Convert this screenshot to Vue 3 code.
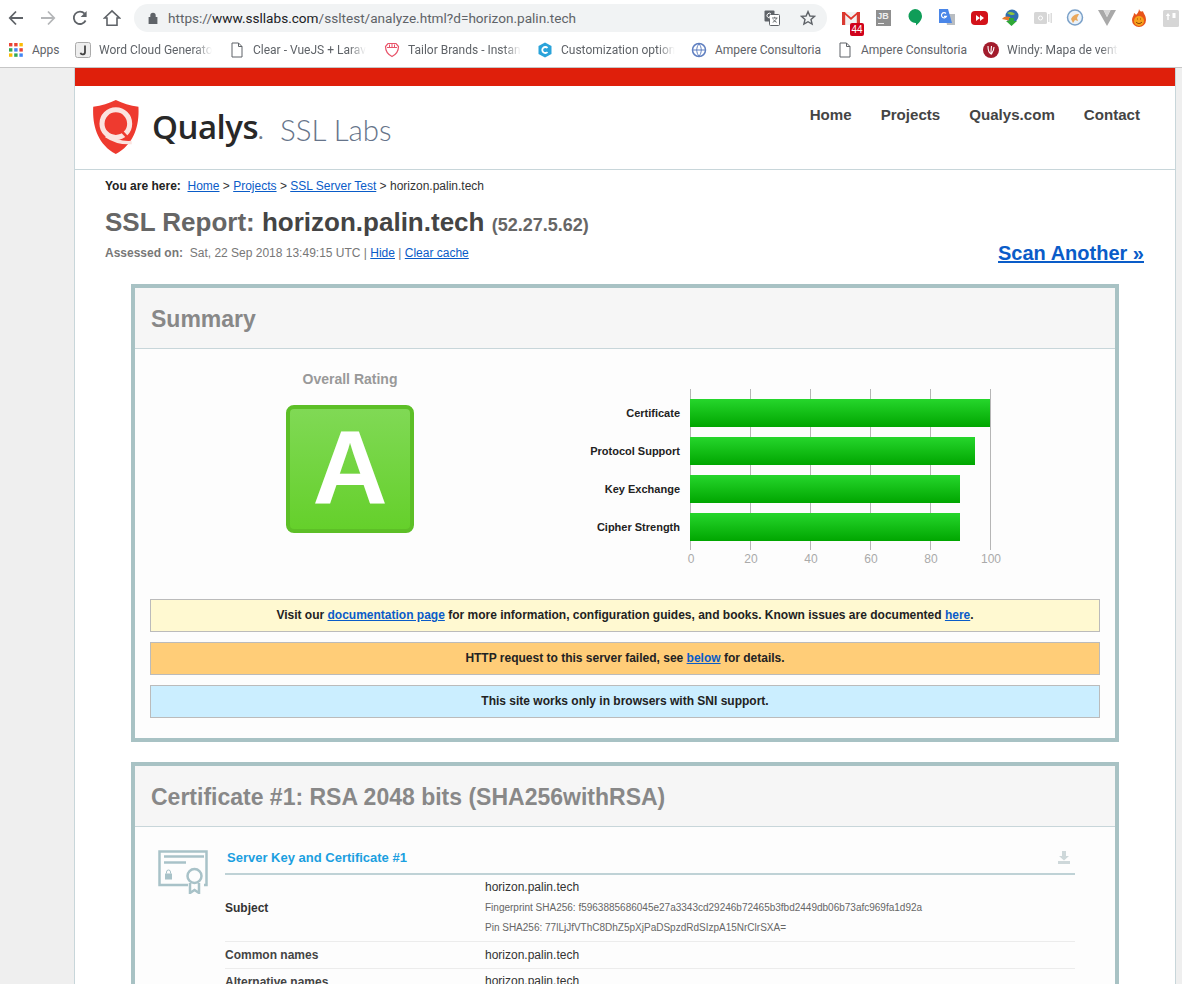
<template>
  <div class="window">
    <!-- browser chrome -->
    <div class="toolbar">
      <button class="nav-btn">
        <svg width="16" height="16" viewBox="0 0 16 16" fill="none" stroke="#5f6368" stroke-width="1.8"><path d="M15 8H2M8 1.5 1.8 8 8 14.5" /></svg>
      </button>
      <button class="nav-btn">
        <svg width="16" height="16" viewBox="0 0 16 16" fill="none" stroke="#b4b6b8" stroke-width="1.8"><path d="M1 8h13M8 1.5 14.2 8 8 14.5" /></svg>
      </button>
      <button class="nav-btn">
        <svg width="16" height="16" viewBox="0 0 16 16" fill="none" stroke="#5f6368" stroke-width="1.8"><path d="M13.6 10.5A6.2 6.2 0 1 1 12.6 3.6" /><path d="M14.6 1v6h-6z" fill="#5f6368" stroke="none" /></svg>
      </button>
      <button class="nav-btn">
        <svg width="18" height="18" viewBox="0 0 18 18" fill="none" stroke="#5f6368" stroke-width="1.6"><path d="M1.5 9 9 1.8 16.500 9H14v7.200H4V9z" /></svg>
      </button>
      <div class="omnibox">
        <svg class="lock" width="10" height="12" viewBox="0 0 10 12"><path d="M2.300 5V3.400a2.700 2.700 0 0 1 5.400 0V5H9.400v7H.6V5z" fill="#5f6368" /></svg>
        <span class="url"><span class="url-dim">https://</span>www.ssllabs.com<span class="url-dim">/ssltest/analyze.html?d=horizon.palin.tech</span></span>
        <svg class="omni-icon" width="16" height="16" viewBox="0 0 16 16">
          <rect x="0.500" y="0.500" width="10" height="11" rx="1" fill="#5f6368" />
          <rect x="5.500" y="4.500" width="10" height="11" rx="1" fill="#fff" stroke="#5f6368" />
          <path d="M8 8h5.500M10.700 6.800V8M12.500 8c-.5 2-2 3.500-3.800 4.300M9.300 9.500c.8 1.300 2 2.300 3.400 2.800" stroke="#5f6368" fill="none" stroke-width=".9" />
          <path d="M7 4a2.300 2.300 0 1 0 .4 2.500H5.300" stroke="#fff" fill="none" stroke-width="1" />
        </svg>
        <svg class="omni-icon star" width="16" height="16" viewBox="0 0 16 16"><path d="M8 1.600 9.900 6l4.700.4-3.600 3.100 1.100 4.600L8 11.700l-4.100 2.400L5 9.500 1.400 6.400 6.100 6z" fill="none" stroke="#5f6368" stroke-width="1.400" /></svg>
      </div>
      <div class="extensions">
        <span class="ext">
          <svg width="18" height="16" viewBox="0 0 18 16"><path d="M0 2h18v13H0z" fill="#f2f2f2" /><path d="M0 2h3.200v13H0zM14.800 2H18v13h-3.200z" fill="#d93a32" /><path d="M0 2h2.500L9 7.500 15.500 2H18L9 10z" fill="#e0352b" /></svg>
          <span class="mail-count">44</span>
        </span>
        <span class="ext"><span class="jb">JB<i></i></span></span>
        <span class="ext">
          <svg width="14" height="18" viewBox="0 0 14 18"><path d="M7 0a7 7 0 0 1 7 7c0 4-3 7-6 9.500V14A7 7 0 0 1 7 0z" fill="#0f9d58" /></svg>
        </span>
        <span class="ext">
          <svg width="18" height="18" viewBox="0 0 18 18"><path d="M7 5h10v11H9z" fill="#b9bdc1" /><path d="M1 0h9l4 14H1z" fill="#4a86e8" /><path d="M8 4.500a2.600 2.600 0 1 0 .5 2.800H6" fill="none" stroke="#fff" stroke-width="1.200" /></svg>
        </span>
        <span class="ext">
          <svg width="17" height="14" viewBox="0 0 17 14"><rect width="17" height="14" rx="4" fill="#d3121a" /><path d="M5 4l4 3-4 3zM9 4l4 3-4 3z" fill="#fff" /></svg>
        </span>
        <span class="ext">
          <svg width="18" height="18" viewBox="0 0 18 18"><circle cx="10" cy="7" r="6.500" fill="#2f6fb0" /><path d="M5 4c3-2 6-1 8 1-2 2-5 1-8-1z" fill="#8dc63f" /><path d="M0 10c2-3 5-3 8-2l1 4z" fill="#e8792b" /><path d="M7 9h5v3h3l-5.500 5L4 12h3z" fill="#2ea836" /></svg>
        </span>
        <span class="ext">
          <svg width="18" height="14" viewBox="0 0 18 14"><rect x="0" y="1" width="13" height="12" rx="1.500" fill="#d6d6d6" /><path d="M14 3h1.500v8H14zM16.500 2H18v10h-1.500z" fill="#dcdcdc" /><circle cx="6.500" cy="7" r="2" fill="none" stroke="#fff" /></svg>
        </span>
        <span class="ext">
          <svg width="18" height="18" viewBox="0 0 18 18"><circle cx="9" cy="8.500" r="7.500" fill="#eaf2fa" stroke="#7aa0c8" stroke-width="1.500" /><path d="M5 10c2-4 5-5 8-5l-2 4 1 3-3-1-2 3z" fill="#e9a75c" /></svg>
        </span>
        <span class="ext">
          <svg width="18" height="16" viewBox="0 0 18 16"><path d="M0 0h5.500L9 7l3.500-7H18l-9 16z" fill="#a9a9a9" /><path d="M5.500 0h7L9 7z" fill="#d9d9d9" /></svg>
        </span>
        <span class="ext">
          <svg width="16" height="19" viewBox="0 0 16 19"><path d="M8 0c1 3 3 3 4 2 0 2 3 4 3 9a7 7 0 0 1-14 0c0-3 2-4 2-7 1 1 2 1 2 2 1-1 3-3 3-6z" fill="#e8541a" /><circle cx="8" cy="12" r="5" fill="#f7a11a" /><path d="M5 13c2 2 4 2 6 0" fill="none" stroke="#7a3208" /><path d="M6 10h.5M9.500 10h.5" stroke="#7a3208" stroke-width="1.500" /></svg>
        </span>
        <span class="ext">
          <svg width="16" height="17" viewBox="0 0 16 17"><rect width="16" height="17" rx="1.500" fill="#d6d6d6" /><path d="M5 3 2.800 6H4.300v4H5.700V6H7.200zM9.500 3h3v5h-3z" fill="#fff" /></svg>
        </span>
      </div>
    </div>
    <div class="bookmarks">
      <a class="bm bm-apps">
        <svg width="14" height="14" viewBox="0 0 14 14">
          <template v-for="(c, i) in appColors" :key="i">
            <rect :x="(i % 3) * 5.200" :y="Math.floor(i / 3) * 5.200" width="3.400" height="3.400" :fill="c" />
          </template>
        </svg>
        <span>Apps</span>
      </a>
      <a v-for="b in bookmarks" :key="b.width + b.title" class="bm" :style="{ width: b.width + 'px' }">
        <svg v-if="b.icon === 'word'" width="16" height="16" viewBox="0 0 16 16"><rect x=".5" y=".5" width="15" height="15" rx="2" fill="#eee" stroke="#aaa" /><path d="M10 3.500V10a2.300 2.300 0 0 1-4.500.8" fill="none" stroke="#444" stroke-width="1.800" /></svg>
        <svg v-else-if="b.icon === 'doc'" width="16" height="16" viewBox="0 0 16 16"><path d="M3 1h6.500L13 4.500V15H3zM9.500 1v3.500H13" fill="none" stroke="#5f6368" /></svg>
        <svg v-else-if="b.icon === 'tailor'" width="16" height="16" viewBox="0 0 16 16"><path d="M4 1.500h8l2.500 3c0 4-2.500 8-6.500 10-4-2-6.500-6-6.500-10z" fill="none" stroke="#e8546a" stroke-width="1.200" /><path d="M3 5.500h10M5.500 2.500v3M8 2v3.500M10.500 2.500v3" stroke="#e8546a" /></svg>
        <svg v-else-if="b.icon === 'custom'" width="16" height="16" viewBox="0 0 16 16"><path d="M8 .5 14.500 4v8L8 15.500 1.500 12V4z" fill="#2aa3da" /><path d="M10.500 6a3 3 0 1 0 0 4" fill="none" stroke="#fff" stroke-width="1.800" /></svg>
        <svg v-else-if="b.icon === 'globe'" width="16" height="16" viewBox="0 0 16 16"><circle cx="8" cy="8" r="6.500" fill="#fff" stroke="#5f7fc0" stroke-width="1.500" /><path d="M2 8h12M8 2c-3 3-3 9 0 12M8 2c3 3 3 9 0 12" fill="none" stroke="#5f7fc0" /></svg>
        <svg v-else width="16" height="16" viewBox="0 0 16 16"><circle cx="8" cy="8" r="8" fill="#a21c2c" /><path d="M5 4c0 4 1 7 3 8 0-3 0-5 .5-8M8.500 12c1-2 2.500-4 2.500-7" fill="none" stroke="#fff" stroke-width="1.100" /></svg>
        <span :class="{ 'bm-fade': b.fade }">{{ b.title }}</span>
      </a>
    </div>

    <!-- page -->
    <div class="page">
      <div class="container">
        <div class="redbar"></div>
        <header class="site-header">
          <div class="logo">
            <svg width="46" height="54" viewBox="0 0 135 160">
              <path d="M67 0c20 10 42 17 67 20 3 55-12 110-67 140C12 130-3 75 0 20 25 17 47 10 67 0z" fill="#ee3a2f" />
              <circle cx="67" cy="70" r="41" fill="#ee3a2f" stroke="#fbe3df" stroke-width="15" />
              <path d="M38 106c24 16 52 22 76 20" fill="none" stroke="#fbe3df" stroke-width="10" />
              <path d="M82 90l26 28" fill="none" stroke="#ee3a2f" stroke-width="8" />
            </svg>
            <span class="logo-name">Qualys<small>.</small></span>
            <span class="logo-sub">SSL Labs</span>
          </div>
          <nav class="site-nav">
            <a>Home</a>
            <a>Projects</a>
            <a>Qualys.com</a>
            <a>Contact</a>
          </nav>
        </header>

        <main class="content">
          <div class="crumbs">
            <b>You are here:</b>&nbsp; <a>Home</a> &gt; <a>Projects</a> &gt; <a>SSL Server Test</a> &gt; horizon.palin.tech
          </div>
          <h1 class="report-title">SSL Report: <span class="host">horizon.palin.tech</span> <span class="ip">(52.27.5.62)</span></h1>
          <div class="assessed-row">
            <div class="assessed"><b>Assessed on:</b>&nbsp; Sat, 22 Sep 2018 13:49:15 UTC | <a>Hide</a> | <a>Clear cache</a></div>
            <a class="scan-another">Scan Another »</a>
          </div>

          <section class="panel summary">
            <h2 class="panel-title">Summary</h2>
            <div class="panel-body">
              <div class="rating-row">
                <div class="rating">
                  <div class="rating-label">Overall Rating</div>
                  <div class="grade">A</div>
                </div>
                <div class="chart">
                  <div class="chart-labels">
                    <div v-for="r in ratings" :key="r.label">{{ r.label }}</div>
                  </div>
                  <div>
                    <div class="plot">
                      <div v-for="r in ratings" :key="r.label" class="bar" :style="{ width: r.value * 3 + 'px' }"></div>
                    </div>
                    <div class="ticks">
                      <span v-for="t in ticks" :key="t">{{ t }}</span>
                    </div>
                  </div>
                </div>
              </div>
              <div class="notice yellow">Visit our <a>documentation page</a> for more information, configuration guides, and books. Known issues are documented <a>here</a>.</div>
              <div class="notice orange">HTTP request to this server failed, see <a>below</a> for details.</div>
              <div class="notice blue">This site works only in browsers with SNI support.</div>
            </div>
          </section>

          <section class="panel cert">
            <h2 class="panel-title">Certificate #1: RSA 2048 bits (SHA256withRSA)</h2>
            <div class="panel-body cert-body">
              <svg class="cert-icon" width="50" height="44" viewBox="0 0 50 44" fill="none" stroke="#a8c2c8">
                <path d="M30 35H1.500V1.500h47V35H46" stroke-width="2.500" />
                <path d="M6 6.500h40" stroke-width="2.500" />
                <path d="M6 12.500h22" stroke-width="2.500" />
                <circle cx="36.500" cy="26" r="7" stroke-width="2.500" />
                <path d="M32 33v10l4.500-3 4.500 3V33" stroke-width="2.500" />
                <rect x="7" y="23.500" width="7" height="6" fill="#a8c2c8" stroke="none" />
                <path d="M8.500 23.500v-1.500a2 2 0 0 1 4 0v1.500" stroke-width="1" />
              </svg>
              <div class="cert-table">
                <div class="cert-head">
                  <span>Server Key and Certificate #1</span>
                  <svg width="12" height="13" viewBox="0 0 12 13"><path d="M4 0h4v5h3L6 9.500 1 5h3zM0 10h12v3H0z" fill="#ced8da" /></svg>
                </div>
                <div class="cert-row">
                  <div class="cert-key strong">Subject</div>
                  <div class="cert-val">
                    <div class="first-line">horizon.palin.tech</div>
                    <div class="fine">Fingerprint SHA256: f5963885686045e27a3343cd29246b72465b3fbd2449db06b73afc969fa1d92a</div>
                    <div class="fine">Pin SHA256: 77lLjJfVThC8DhZ5pXjPaDSpzdRdSIzpA15NrClrSXA=</div>
                  </div>
                </div>
                <div class="cert-row">
                  <div class="cert-key">Common names</div>
                  <div class="cert-val">horizon.palin.tech</div>
                </div>
                <div class="cert-row">
                  <div class="cert-key">Alternative names</div>
                  <div class="cert-val">horizon.palin.tech</div>
                </div>
              </div>
            </div>
          </section>
        </main>
      </div>
    </div>
  </div>
</template>

<script setup>
const appColors = ['#ea4335', '#ea4335', '#fbbc05', '#34a853', '#4285f4', '#ea4335', '#fbbc05', '#34a853', '#4285f4']

const bookmarks = [
  { width: 154, icon: 'word', title: 'Word Cloud Generato', fade: true },
  { width: 155, icon: 'doc', title: 'Clear - VueJS + Larav', fade: true },
  { width: 153, icon: 'tailor', title: 'Tailor Brands - Instan', fade: true },
  { width: 154, icon: 'custom', title: 'Customization option', fade: true },
  { width: 146, icon: 'globe', title: 'Ampere Consultoria' },
  { width: 146, icon: 'doc', title: 'Ampere Consultoria' },
  { width: 140, icon: 'windy', title: 'Windy: Mapa de vent', fade: true }
]

const ratings = [
  { label: 'Certificate', value: 100 },
  { label: 'Protocol Support', value: 95 },
  { label: 'Key Exchange', value: 90 },
  { label: 'Cipher Strength', value: 90 }
]

const ticks = [0, 20, 40, 60, 80, 100]
</script>

<style>
html, body {
  margin: 0;
  overflow: hidden;
}
</style>

<style scoped>
.window {
  width: 1182px;
  height: 984px;
  overflow: hidden;
  font-family: "Liberation Sans", Arial, sans-serif;
  background: #fff;
}

a {
  color: #0a5cc8;
  text-decoration: underline;
}

/* browser chrome */
.toolbar {
  height: 36px;
  display: flex;
  align-items: center;
  background: #fff;
}

.nav-btn {
  flex: none;
  width: 32px;
  height: 36px;
  border: 0;
  padding: 0;
  background: none;
  display: flex;
  align-items: center;
  justify-content: center;
}

.omnibox {
  flex: none;
  width: 693px;
  height: 28px;
  margin-left: 6px;
  padding: 0 11px 0 14px;
  box-sizing: border-box;
  background: #f1f3f4;
  border-radius: 14px;
  display: flex;
  align-items: center;
  font-family: Roboto, sans-serif;
  font-size: 13.600px;
  color: #202124;
}

.lock {
  margin-right: 10px;
}

.url {
  flex: 1;
  white-space: nowrap;
}

.url-dim {
  color: #5f6368;
}

.omni-icon {
  flex: none;
}

.star {
  margin-left: 20px;
}

.extensions {
  flex: none;
  display: flex;
  margin-left: 8px;
}

.ext {
  position: relative;
  width: 32px;
  height: 36px;
  display: flex;
  align-items: center;
  justify-content: center;
}

.mail-count {
  position: absolute;
  left: 15px;
  top: 23px;
  width: 14px;
  height: 13px;
  background: #d0021b;
  border-radius: 2px;
  color: #fff;
  font-size: 10px;
  line-height: 13px;
  text-align: center;
  font-family: "Liberation Sans", sans-serif;
}

.jb {
  position: relative;
  width: 15px;
  height: 16px;
  background: #8f8f8f;
  color: #eee;
  font-size: 9px;
  font-weight: bold;
  line-height: 12px;
  text-align: center;
}

.jb i {
  position: absolute;
  left: 2px;
  bottom: 2px;
  width: 6px;
  height: 1px;
  background: #eee;
}

.bookmarks {
  height: 28px;
  padding-bottom: 3px;
  display: flex;
  align-items: center;
  border-bottom: 1px solid #c6c6c6;
  font-family: Roboto, sans-serif;
  font-size: 12px;
  color: #5f6368;
}

.bm {
  flex: none;
  display: flex;
  align-items: center;
  gap: 8px;
  color: #5f6368;
  text-decoration: none;
  white-space: nowrap;
}

.bm-apps {
  width: 50px;
  margin-left: 9px;
  margin-right: 16px;
  gap: 9px;
}

.bm svg {
  flex: none;
}

.bm-fade {
  -webkit-mask-image: linear-gradient(90deg, #000 85%, transparent);
  mask-image: linear-gradient(90deg, #000 85%, transparent);
}

/* page */
.page {
  background: #efefef;
  padding-left: 74px;
  height: 916px;
}

.container {
  width: 1100px;
  background: #fff;
  border-left: 1px solid #c8d6da;
  border-right: 1px solid #c8d6da;
}

.redbar {
  height: 18px;
  background: #df1f0b;
}

.site-header {
  height: 84px;
  box-sizing: border-box;
  border-bottom: 1px solid #c8d6da;
  display: flex;
  justify-content: space-between;
  padding: 14px 35px 0 18px;
}

.logo {
  display: flex;
  align-items: flex-start;
}

.logo-name {
  margin: 4px 0 0 13px;
  font-family: "Open Sans", sans-serif;
  font-size: 33px;
  line-height: 46px;
  font-weight: 600;
  color: #282828;
  letter-spacing: -0.5px;
}

.logo-name small {
  font-size: 20px;
  color: #6e7b8c;
}

.logo-sub {
  margin: 11px 0 0 17px;
  font-family: Lato, sans-serif;
  font-size: 29.500px;
  line-height: 38px;
  font-weight: 300;
  color: #66748a;
}

.site-nav {
  display: flex;
  gap: 29px;
  padding-top: 6px;
}

.site-nav a {
  font-size: 15.100px;
  line-height: 18px;
  font-weight: bold;
  color: #444;
  text-decoration: none;
}

.content {
  padding: 0 31px 0 30px;
}

.crumbs {
  padding-top: 9px;
  font-size: 12px;
  line-height: 14px;
  color: #333;
}

.crumbs b {
  color: #222;
}

.report-title {
  margin: 14px 0 0;
  font-size: 26px;
  line-height: 30px;
  font-weight: bold;
  color: #666;
}

.host {
  color: #444;
}

.ip {
  font-size: 18px;
  line-height: 1;
}

.assessed-row {
  display: flex;
  justify-content: space-between;
  align-items: center;
  height: 32px;
}

.assessed {
  font-size: 12px;
  line-height: 14px;
  color: #777;
}

.scan-another {
  font-size: 20px;
  line-height: 23px;
  font-weight: bold;
}

.panel {
  width: 988px;
  margin-left: 26px;
  box-sizing: border-box;
  border: 4px solid #a8c2c4;
  background: #fdfdfd;
}

.summary {
  margin-top: 15px;
  margin-bottom: 20px;
}

.panel-title {
  margin: 0;
  height: 61px;
  box-sizing: border-box;
  padding: 2px 0 0 16px;
  background: #f6f6f6;
  border-bottom: 1px solid #c8d6da;
  font-size: 23px;
  line-height: 58px;
  font-weight: bold;
  color: #888;
}

.panel-body {
  padding: 0 15px 20px;
}

.rating-row {
  display: flex;
  height: 250px;
}

.rating {
  width: 400px;
  display: flex;
  flex-direction: column;
  align-items: center;
  padding-top: 22px;
}

.rating-label {
  font-size: 14px;
  line-height: 16px;
  font-weight: bold;
  color: #999;
  margin-bottom: 18px;
}

.grade {
  width: 128px;
  height: 128px;
  box-sizing: border-box;
  border: 4px solid #5dbf27;
  border-radius: 8px;
  background: linear-gradient(#80d955, #65d02b);
  color: #fff;
  font-size: 104px;
  line-height: 116px;
  font-weight: bold;
  text-align: center;
}

.chart {
  display: flex;
  padding-top: 40px;
}

.chart-labels {
  width: 130px;
  padding-top: 10px;
  font-size: 11px;
  font-weight: bold;
  color: #222;
  text-align: right;
}

.chart-labels div {
  height: 28px;
  line-height: 28px;
  margin-bottom: 10px;
}

.plot {
  width: 301px;
  margin-left: 10px;
  height: 161px;
  box-sizing: border-box;
  padding-top: 10px;
  background: repeating-linear-gradient(90deg, #b6b6b6 0 1px, transparent 1px 60px);
}

.bar {
  height: 28px;
  margin-bottom: 10px;
  background: linear-gradient(#26d62c, #00a600);
}

.ticks {
  display: flex;
  margin: 2px 0 0 -19px;
  font-size: 12px;
  line-height: 14px;
  color: #aaa;
}

.ticks span {
  width: 60px;
  text-align: center;
}

.notice {
  height: 33px;
  box-sizing: border-box;
  border: 1px solid #bbb;
  margin-bottom: 10px;
  font-size: 12px;
  line-height: 30px;
  font-weight: bold;
  color: #222;
  text-align: center;
}

.notice:last-child {
  margin-bottom: 0;
}

.yellow {
  background: #fff9d1;
}

.orange {
  background: #ffcd78;
}

.blue {
  background: #cbeeff;
}

.cert-body {
  display: flex;
  padding: 0;
}

.cert-icon {
  flex: none;
  margin: 23px 17px 0 23px;
}

.cert-table {
  width: 850px;
}

.cert-head {
  height: 48px;
  box-sizing: border-box;
  border-bottom: 2px solid #bfd2d6;
  display: flex;
  justify-content: space-between;
  align-items: center;
  padding: 14px 5px 0 2px;
  font-size: 13px;
  font-weight: bold;
  color: #1b9fe0;
}

.cert-row {
  display: flex;
  align-items: center;
  border-bottom: 1px solid #ececec;
  font-size: 12px;
  color: #333;
  min-height: 26px;
}

.cert-row:last-child {
  min-height: 24px;
}

.cert-key {
  width: 260px;
  font-weight: bold;
  color: #444;
}

.strong {
  color: #333;
}

.cert-val {
  line-height: 20px;
  padding: 2px 0 3px;
}

.first-line {
  line-height: 21px;
}

.fine {
  font-size: 10px;
  color: #666;
}
</style>
